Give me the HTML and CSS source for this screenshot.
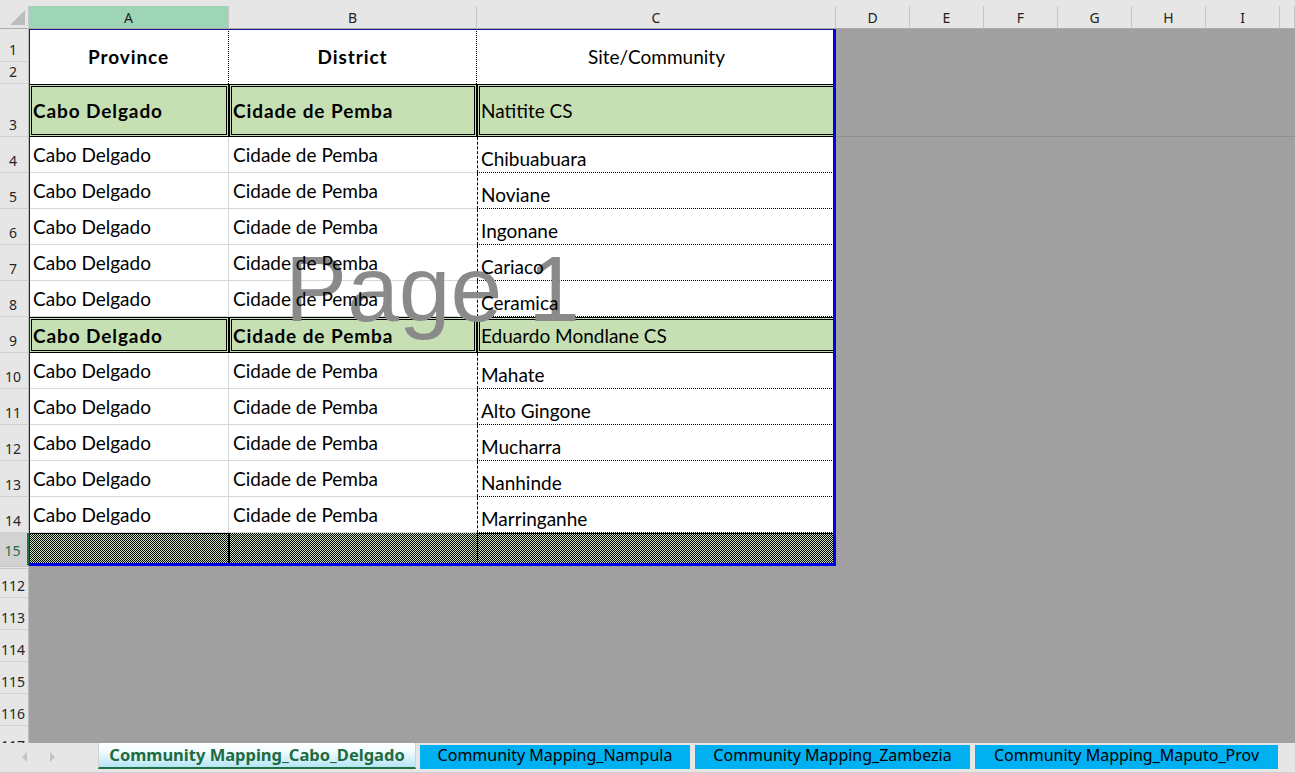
FILE: index.html
```html
<!DOCTYPE html>
<html lang="en">
<head>
<meta charset="utf-8">
<title>Community Mapping</title>
<link rel="stylesheet" href="styles.css">
</head>
<body>
<div class="app">
  <div class="topstrip"></div>
  <div class="sheet">
    <div class="corner"><svg width="29" height="23" viewBox="0 0 29 23"><polygon points="25,4 25,19 10,19" fill="#bdbdbd"/></svg></div>
    <div class="colh sel">A</div>
    <div class="colh">B</div>
    <div class="colh">C</div>
    <div class="colh">D</div>
    <div class="colh">E</div>
    <div class="colh">F</div>
    <div class="colh">G</div>
    <div class="colh">H</div>
    <div class="colh">I</div>
    <div class="colh"></div>

    <div class="freeze"></div>
    <div class="watermark">Page 1</div>
    <div class="printarea"></div>

    <div class="rh">1</div>
    <div class="ca head hdot"><span class="t b">Province</span></div>
    <div class="cb head hdot"><span class="t b">District</span></div>
    <div class="cc head"><span class="t">Site/Community</span></div>
    <div class="rh">2</div>

    <div class="rh">3</div>
    <div class="ca green"><span class="t b">Cabo Delgado</span></div>
    <div class="cb green"><span class="t b">Cidade de Pemba</span></div>
    <div class="cc green"><span class="t">Natitite CS</span></div>

    <div class="rh">4</div>
    <div class="ca"><span class="t">Cabo Delgado</span></div>
    <div class="cb"><span class="t">Cidade de Pemba</span></div>
    <div class="cc"><span class="t">Chibuabuara</span></div>

    <div class="rh">5</div>
    <div class="ca"><span class="t">Cabo Delgado</span></div>
    <div class="cb"><span class="t">Cidade de Pemba</span></div>
    <div class="cc"><span class="t">Noviane</span></div>

    <div class="rh">6</div>
    <div class="ca"><span class="t">Cabo Delgado</span></div>
    <div class="cb"><span class="t">Cidade de Pemba</span></div>
    <div class="cc"><span class="t">Ingonane</span></div>

    <div class="rh">7</div>
    <div class="ca"><span class="t">Cabo Delgado</span></div>
    <div class="cb"><span class="t">Cidade de Pemba</span></div>
    <div class="cc"><span class="t">Cariaco</span></div>

    <div class="rh">8</div>
    <div class="ca"><span class="t">Cabo Delgado</span></div>
    <div class="cb"><span class="t">Cidade de Pemba</span></div>
    <div class="cc"><span class="t">Ceramica</span></div>

    <div class="rh">9</div>
    <div class="ca green"><span class="t b">Cabo Delgado</span></div>
    <div class="cb green"><span class="t b">Cidade de Pemba</span></div>
    <div class="cc green"><span class="t">Eduardo Mondlane CS</span></div>

    <div class="rh">10</div>
    <div class="ca"><span class="t">Cabo Delgado</span></div>
    <div class="cb"><span class="t">Cidade de Pemba</span></div>
    <div class="cc"><span class="t">Mahate</span></div>

    <div class="rh">11</div>
    <div class="ca"><span class="t">Cabo Delgado</span></div>
    <div class="cb"><span class="t">Cidade de Pemba</span></div>
    <div class="cc"><span class="t">Alto Gingone</span></div>

    <div class="rh">12</div>
    <div class="ca"><span class="t">Cabo Delgado</span></div>
    <div class="cb"><span class="t">Cidade de Pemba</span></div>
    <div class="cc"><span class="t">Mucharra</span></div>

    <div class="rh">13</div>
    <div class="ca"><span class="t">Cabo Delgado</span></div>
    <div class="cb"><span class="t">Cidade de Pemba</span></div>
    <div class="cc"><span class="t">Nanhinde</span></div>

    <div class="rh">14</div>
    <div class="ca"><span class="t">Cabo Delgado</span></div>
    <div class="cb"><span class="t">Cidade de Pemba</span></div>
    <div class="cc"><span class="t">Marringanhe</span></div>

    <div class="rh rsel">15</div>
    <div class="ca hatch"></div>
    <div class="cb hatch"></div>
    <div class="cc hatch"></div>

    <div class="rh rjump">112</div>
    <div class="rh">113</div>
    <div class="rh">114</div>
    <div class="rh">115</div>
    <div class="rh">116</div>
    <div class="rh">117</div>
  </div>
  <div class="tabbar">
    <div class="nav"><span class="arrow left"></span><span class="arrow right"></span></div>
    <div class="tab active w1">Community Mapping_Cabo_Delgado</div>
    <div class="tab w2">Community Mapping_Nampula</div>
    <div class="tab w3">Community Mapping_Zambezia</div>
    <div class="tab w4">Community Mapping_Maputo_Prov</div>
  </div>
</div>
</body>
</html>
```
FILE: styles.css
```css
* { box-sizing: border-box; margin: 0; padding: 0; }
html, body { width: 1295px; height: 773px; overflow: hidden; }
body { background: #a0a0a0; font-family: "Lato", "Liberation Sans", sans-serif; color: #000; }

.app { display: flex; flex-direction: column; height: 773px; }
.topstrip { flex: none; height: 6px; background: #e6e6e6; }

.sheet {
  position: relative;
  flex: none;
  height: 737px;
  overflow: hidden;
  display: grid;
  grid-template-columns: 29px 200px 248px 359px repeat(6, 74px) 1fr;
  grid-template-rows: 23px 33px 22px 53px repeat(11, 36px) 33px repeat(6, 32px);
  background: #a0a0a0;
}

/* headers */
.corner { grid-column: 1; grid-row: 1; background: #e6e6e6; border-right: 1px solid #c8c8c8; border-bottom: 1px solid #ababab; }
.corner svg { display: block; }
.colh {
  grid-row: 1;
  background: #e6e6e6;
  border-right: 1px solid #c6c6c6;
  border-bottom: 1px solid #ababab;
  font-family: "Noto Sans", sans-serif;
  font-size: 14px;
  color: #222;
  display: flex;
  align-items: center;
  justify-content: center;
}
.colh.sel { background: #9fd5b7; }

.rh {
  grid-column: 1;
  background: #e6e6e6;
  border-right: 1px solid #bdbdbd;
  border-bottom: 1px solid #d2d2d2;
  font-family: "Noto Sans", sans-serif;
  font-size: 14px;
  line-height: 16px;
  color: #262626;
  display: flex;
  align-items: flex-end;
  justify-content: center;
  padding-bottom: 3px;
  padding-right: 2px;
}
.rh.rsel { background: #d2d2d2; color: #217346; border-right: 2px solid #217346; padding-bottom: 6px; }
.rh.rjump { border-top: 3px double #c8c8c8; }

/* cells */
.ca, .cb, .cc {
  background: #fff;
  display: flex;
  align-items: center;
  font-size: 19px;
  line-height: 22px;
  white-space: nowrap;
  padding-left: 4px;
}
.ca { grid-column: 2; border-bottom: 1px solid #d6d6d6; border-right: 1px solid #d6d6d6; }
.cb { grid-column: 3; border-bottom: 1px solid #d6d6d6; }
.cc { grid-column: 4; border-left: 1px dashed #000; border-bottom: 1px dotted #000; align-items: flex-end; padding-left: 3px; padding-bottom: 2px; }

.t { position: relative; z-index: 2; }
.b { font-weight: 700; letter-spacing: 0.9px; }

.head { grid-row: span 2; justify-content: center; align-items: center; padding: 0; border-bottom: 0; }
.cc.head { border-left: 0; border-bottom: 0; align-items: center; padding: 0; }
.hdot { border-right: 1px dotted #000; }

.ca.green, .cb.green, .cc.green {
  background: #c6e0b4;
  border: 3px double #000;
  align-items: center;
  padding: 1px 0 0 1px;
}

.hatch {
  background-color: #c6e0b4;
  background-image: repeating-conic-gradient(#000 0% 25%, #c6e0b4 0% 50%);
  background-size: 2px 2px;
}
.ca.hatch { border: 0; border-top: 1px dotted #000; border-right: 1px dotted #000; }
.cb.hatch { border: 0; border-top: 1px dotted #000; border-left: 1px dotted #000; border-right: 1px dotted #000; }
.cc.hatch { border: 0; border-top: 1px dotted #000; border-left: 1px dotted #000; }

/* overlays (absolutely positioned inside their grid areas) */
.freeze {
  position: absolute;
  inset: 0;
  grid-column: 5 / -1;
  grid-row: 4 / 5;
  border-bottom: 1px solid #8f8f8f;
}
.watermark {
  position: absolute;
  inset: 0;
  grid-column: 2 / 5;
  grid-row: 2 / 17;
  z-index: 1;
  display: flex;
  align-items: center;
  justify-content: center;
  padding-bottom: 16px;
  font-family: "Liberation Sans", Arial, sans-serif;
  font-size: 93px;
  line-height: 1;
  color: #8a8a8a;
  pointer-events: none;
}
.printarea {
  position: absolute;
  inset: 0;
  grid-column: 2 / 5;
  grid-row: 2 / 17;
  z-index: 3;
  border-top: 1px solid #1a1a8c;
  border-left: 1px solid #1a1a8c;
  border-right: 3px solid #0000e6;
  border-bottom: 3px solid #0000e6;
  pointer-events: none;
}

/* tab bar */
.tabbar {
  flex: none;
  height: 30px;
  background: #e6e6e6;
  display: flex;
  align-items: flex-start;
  border-bottom: 1px solid #cfcfcf;
}
.nav { width: 98px; height: 28px; display: flex; align-items: center; padding-left: 22px; gap: 23px; }
.arrow { width: 0; height: 0; border-top: 5px solid transparent; border-bottom: 5px solid transparent; }
.arrow.left { border-right: 5px solid #c4c4c4; }
.arrow.right { border-left: 5px solid #c4c4c4; }

.tab {
  flex: none;
  height: 24px;
  margin-top: 2px;
  margin-left: 5px;
  background: #00b0f0;
  color: #000;
  font-family: "Noto Sans", sans-serif;
  font-size: 16px;
  line-height: 21px;
  text-align: center;
  white-space: nowrap;
}
.tab.active {
  margin-top: 0;
  margin-left: 0;
  height: 26px;
  line-height: 23px;
  background: linear-gradient(#ffffff 0%, #f2fbfe 35%, #b6e5f6 100%);
  border-left: 1px solid #d0d0d0;
  border-right: 1px solid #d0d0d0;
  border-bottom: 2px solid #217346;
  color: #1e6b40;
  font-weight: 700;
  font-size: 16.5px;
}
.w1 { width: 318px; }
.w2 { width: 270px; margin-left: 4px; }
.w3 { width: 275px; }
.w4 { width: 303px; }
```
